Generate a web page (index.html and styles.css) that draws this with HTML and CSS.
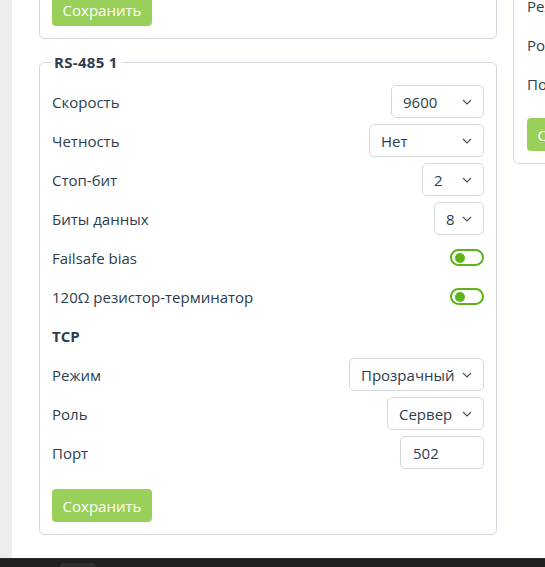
FILE: index.html
```html
<!DOCTYPE html>
<html lang="ru">
<head>
<meta charset="utf-8">
<title>RS-485</title>
<link rel="stylesheet" href="styles.css">
</head>
<body>
<div class="screen">
  <div class="strip"></div>
  <main class="page">
    <div class="col col-left">
      <section class="card card-top">
        <button class="btn">Сохранить</button>
      </section>
      <fieldset class="card fs">
        <legend>RS-485 1</legend>
        <div class="rows">
          <div class="row"><span>Скорость</span>
            <div class="select w-speed"><span>9600</span><svg class="chev" viewBox="0 0 10 6"><path d="M1 1l4 4 4-4"/></svg></div></div>
          <div class="row"><span>Четность</span>
            <div class="select w-parity"><span>Нет</span><svg class="chev" viewBox="0 0 10 6"><path d="M1 1l4 4 4-4"/></svg></div></div>
          <div class="row"><span>Стоп-бит</span>
            <div class="select w-stop"><span>2</span><svg class="chev" viewBox="0 0 10 6"><path d="M1 1l4 4 4-4"/></svg></div></div>
          <div class="row"><span>Биты данных</span>
            <div class="select w-data"><span>8</span><svg class="chev" viewBox="0 0 10 6"><path d="M1 1l4 4 4-4"/></svg></div></div>
          <div class="row"><span>Failsafe bias</span><span class="toggle"><span class="knob"></span></span></div>
          <div class="row"><span>120Ω резистор-терминатор</span><span class="toggle"><span class="knob"></span></span></div>
          <div class="row"><strong class="sub">TCP</strong></div>
          <div class="row"><span>Режим</span>
            <div class="select w-mode"><span>Прозрачный</span><svg class="chev" viewBox="0 0 10 6"><path d="M1 1l4 4 4-4"/></svg></div></div>
          <div class="row"><span>Роль</span>
            <div class="select w-role"><span>Сервер</span><svg class="chev" viewBox="0 0 10 6"><path d="M1 1l4 4 4-4"/></svg></div></div>
          <div class="row"><span>Порт</span>
            <div class="input w-port">502</div></div>
        </div>
        <button class="btn btn-bottom">Сохранить</button>
      </fieldset>
    </div>
    <div class="col col-right">
      <section class="card card-side">
        <div class="rows">
          <div class="row"><span>Режим</span></div>
          <div class="row"><span>Роль</span></div>
          <div class="row"><span>Порт</span></div>
        </div>
        <button class="btn btn-side">Сохранить</button>
      </section>
    </div>
  </main>
</div>
<footer class="taskbar"><span class="tab"></span></footer>
</body>
</html>
```
FILE: styles.css
```css
html, body {
  margin: 0;
  padding: 0;
  height: 100%;
  overflow: hidden;
  background: #ffffff;
  font-family: "Open Sans", "Noto Sans", sans-serif;
  font-size: 15px;
  line-height: 20px;
  color: #2c3e50;
}

.screen {
  display: flex;
  height: 558px;
  overflow: hidden;
}

.strip {
  width: 12px;
  flex: 0 0 12px;
  background: #ededed;
}

.page {
  flex: 1;
  display: grid;
  grid-template-columns: 458px 200px;
  column-gap: 16px;
  align-items: start;
  padding-left: 27px;
}

.col {
  display: flex;
  flex-direction: column;
}

.col-left {
  margin-top: -20px;
}

.col-right {
  margin-top: -24px;
}

.card {
  border: 1px solid #d4d8df;
  border-radius: 5px;
  background: #fff;
  padding: 12px;
  box-sizing: border-box;
}

.fs {
  margin: 13px 0 0;
  padding: 13px 12px 12px;
  min-width: 0;
}

.fs legend {
  padding: 0 4px 0 2px;
  font-weight: 700;
  color: #2c3e50;
  line-height: 20px;
  letter-spacing: 0.3px;
}

.rows {
  display: flex;
  flex-direction: column;
  gap: 6px;
}

.row {
  display: flex;
  align-items: center;
  justify-content: space-between;
  min-height: 33px;
}

.sub {
  font-weight: 700;
}

.select, .input {
  box-sizing: border-box;
  height: 33px;
  border: 1px solid #d4d8df;
  border-radius: 5px;
  display: flex;
  align-items: center;
  justify-content: space-between;
  padding: 0 11px 0 11px;
  color: #2c3e50;
  background: #fff;
}

.chev {
  width: 10px;
  height: 6px;
  fill: none;
  stroke: #4a4f57;
  stroke-width: 1.1;
  flex: 0 0 auto;
}

.w-speed { width: 93px; }
.w-parity { width: 115px; }
.w-stop { width: 62px; }
.w-data { width: 50px; }
.w-mode { width: 135px; }
.w-role { width: 97px; }
.w-port { width: 84px; justify-content: flex-start; padding-left: 12px; }

.toggle {
  box-sizing: border-box;
  width: 34px;
  height: 17px;
  border: 2px solid #5db515;
  border-radius: 9px;
  display: flex;
  align-items: center;
  padding-left: 3px;
}

.knob {
  width: 10px;
  height: 10px;
  border-radius: 50%;
  background: #5db515;
}

.btn {
  align-self: flex-start;
  width: 100px;
  height: 33px;
  border: none;
  border-radius: 4px;
  background: #99d05a;
  color: #ffffff;
  font-family: inherit;
  font-size: 15px;
  padding: 0;
  cursor: pointer;
}

.btn-bottom {
  margin-top: 20px;
  display: block;
}

.btn-side {
  margin-top: 18px;
  display: block;
}

.card-side {
  width: 200px;
  padding-left: 13px;
}

.taskbar {
  height: 9px;
  background: #202020;
  border-top: 1px solid #2a2a2a;
  box-sizing: border-box;
  position: relative;
}

.tab {
  position: absolute;
  left: 60px;
  top: 4px;
  width: 36px;
  height: 6px;
  background: #2e2e2e;
  border-radius: 4px 4px 0 0;
}
```
